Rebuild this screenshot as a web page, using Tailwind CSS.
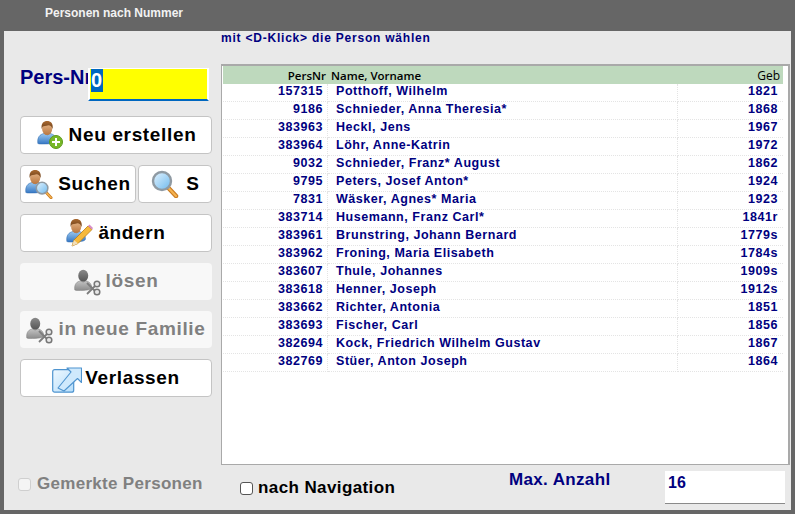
<!DOCTYPE html>
<html lang="de">
<head>
  <meta charset="UTF-8" />
  <title>Personen nach Nummer</title>
  <script src="https://cdn.jsdelivr.net/npm/@tailwindcss/browser@4"></script>
</head>
<body class="w-[795px] h-[514px] overflow-hidden bg-[#666666] font-['Liberation_Sans',Arial,sans-serif]">

  <!-- gemeinsame Icon-Teile -->
  <svg width="0" height="0" class="absolute">
    <defs>
      <linearGradient id="skin" x1="0" y1="0" x2="0" y2="1"><stop offset="0" stop-color="#e8b98c"/><stop offset="1" stop-color="#b9763f"/></linearGradient>
      <linearGradient id="hair" x1="0" y1="0" x2="0" y2="1"><stop offset="0" stop-color="#a8682f"/><stop offset="1" stop-color="#6b3f1a"/></linearGradient>
      <linearGradient id="shirt" x1="0" y1="0" x2="0" y2="1"><stop offset="0" stop-color="#9cc9f0"/><stop offset="1" stop-color="#3577c4"/></linearGradient>
      <linearGradient id="glass" x1="0" y1="0" x2="1" y2="1"><stop offset="0" stop-color="#e4f4ff"/><stop offset="1" stop-color="#6db9ee"/></linearGradient>
      <linearGradient id="greyhead" x1="0" y1="0" x2="0" y2="1"><stop offset="0" stop-color="#8a8a8a"/><stop offset="1" stop-color="#555555"/></linearGradient>
      <linearGradient id="greybody" x1="0" y1="0" x2="0" y2="1"><stop offset="0" stop-color="#c4c4c4"/><stop offset="1" stop-color="#8c8c8c"/></linearGradient>
      <linearGradient id="box" x1="0" y1="0" x2="1" y2="1"><stop offset="0" stop-color="#eef8ff"/><stop offset="1" stop-color="#b5ddfa"/></linearGradient>
      <symbol id="person" viewBox="0 0 26 28">
        <path d="M1 27c-1-7 2-11 8-12l3 2 3-2c5 1 8 4 8 9 0 2-3 3-11 3.500C7 27.500 3 28 1 27z" fill="url(#shirt)" stroke="#2f6bb0" stroke-width=".6"/>
        <ellipse cx="12" cy="9.500" rx="6" ry="7.500" fill="url(#skin)"/>
        <path d="M5.500 10C4.500 3 8 .5 12 .5s7.500 2.500 6.500 9.500c-1-3-2.500-4.500-5-4.500-3 1-6 1-6.500 1.500-.8.800-1.200 1.800-1.500 3z" fill="url(#hair)"/>
      </symbol>
      <symbol id="greyperson" viewBox="0 0 26 28">
        <path d="M1 27c-1-7 2-11 8-12l3 2 3-2c5 1 8 4 8 9 0 2-3 3-11 3.500C7 27.500 3 28 1 27z" fill="url(#greybody)" stroke="#777777" stroke-width=".6"/>
        <ellipse cx="12" cy="8.500" rx="6.500" ry="7.800" fill="url(#greyhead)"/>
      </symbol>
      <symbol id="lens" viewBox="0 0 28 28">
        <path d="M17.500 18l7.500 8" stroke="#c97a20" stroke-width="4.500" stroke-linecap="round"/>
        <path d="M17.500 18l7.500 8" stroke="#f5b350" stroke-width="2.200" stroke-linecap="round"/>
        <circle cx="11" cy="11" r="9" fill="url(#glass)" stroke="#8f9aa3" stroke-width="2.400"/>
      </symbol>
      <symbol id="scissors" viewBox="0 0 16 16">
        <path d="M2 14L13 3M2 3l11 11" stroke="#7d7d7d" stroke-width="1.800"/>
        <circle cx="12" cy="12" r="2.800" fill="#e8e8e8" stroke="#777777" stroke-width="1.500"/>
        <circle cx="12" cy="4" r="2.800" fill="#e8e8e8" stroke="#777777" stroke-width="1.500"/>
      </symbol>
    </defs>
  </svg>

  <!-- Titelleiste -->
  <div class="h-[31px] pl-[45px] pt-[6px] text-[12px] leading-[14px] font-bold text-[#f2f2f2]">Personen nach Nummer</div>

  <div class="h-[479px] mx-[4px] bg-[#e9e9e9] flex">

    <!-- linke Spalte -->
    <div class="w-[217px] shrink-0 pl-[16px] flex flex-col">
      <div class="flex mt-[37px] h-[33px]">
        <div class="w-[68px] overflow-hidden whitespace-nowrap text-[20px] leading-[19px] font-bold text-[#000080]">Pers-Nr</div>
        <div class="w-[121px] h-[33px] bg-[#ffff00] border-t border-x-2 border-t-white border-r-white border-l-white border-b-2 border-b-[#0067c0] pl-[1px] text-[20px] leading-[23px] font-bold">
          <span class="inline-block bg-[#0067c0] text-white tracking-[1px] h-[23px]">0</span>
        </div>
      </div>

      <div class="mt-[15px] w-[192px] flex flex-col gap-[11px]">
        <button class="h-[38px] bg-white border border-[#c4c4c4] rounded-[4px] flex items-center justify-center gap-[5px] text-[19px] font-bold tracking-[0.65px] text-black whitespace-nowrap">
          <svg width="28" height="30" viewBox="0 0 28 30">
            <use href="#person" x="1" y="0" width="22" height="25"/>
            <circle cx="20" cy="22" r="6.500" fill="#78b828" stroke="#5d9a1c"/>
            <path d="M20 18v8M16 22h8" stroke="#ffffff" stroke-width="2"/>
          </svg>
          Neu erstellen
        </button>
        <div class="flex gap-[2px]">
          <button class="w-[116px] h-[38px] bg-white border border-[#c4c4c4] rounded-[4px] flex items-center justify-center gap-[5px] text-[19px] font-bold tracking-[0.65px] text-black">
            <svg width="28" height="30" viewBox="0 0 28 30">
              <use href="#person" x="0" y="0" width="22" height="25"/>
              <use href="#lens" x="10" y="12" width="18" height="18"/>
            </svg>
            Suchen
          </button>
          <button class="w-[74px] h-[38px] bg-white border border-[#c4c4c4] rounded-[4px] flex items-center justify-center gap-[7px] text-[19px] font-bold text-black">
            <svg width="28" height="28" viewBox="0 0 28 28"><use href="#lens" width="28" height="28"/></svg>
            S
          </button>
        </div>
        <button class="h-[38px] bg-white border border-[#c4c4c4] rounded-[4px] flex items-center justify-center gap-[5px] text-[19px] font-bold tracking-[0.65px] text-black">
          <svg width="27" height="30" viewBox="0 0 27 30">
            <use href="#person" x="0" y="0" width="22" height="25"/>
            <path d="M6 28l2-6L22 8l4 3.500L12 25.500z" fill="#f6b93b" stroke="#b97c18" stroke-width=".8"/>
            <path d="M22 8l1.500-1.500 3.500 3.500-1 1.500z" fill="#d78cc8"/>
            <path d="M6 28l2-6 4 3.500z" fill="#f3dfb8"/>
          </svg>
          ändern
        </button>
        <button disabled class="h-[37px] bg-[#f8f8f8] rounded-[4px] flex items-center justify-center gap-[5px] text-[19px] font-bold tracking-[0.65px] text-[#808080]">
          <svg width="27" height="28" viewBox="0 0 27 28">
            <use href="#greyperson" x="0" y="0" width="20" height="24"/>
            <use href="#scissors" x="11" y="12" width="16" height="16"/>
          </svg>
          lösen
        </button>
        <button disabled class="h-[37px] bg-[#f8f8f8] rounded-[4px] flex items-center justify-center gap-[5px] text-[19px] font-bold tracking-[0.65px] text-[#808080] whitespace-nowrap">
          <svg width="27" height="28" viewBox="0 0 27 28">
            <use href="#greyperson" x="0" y="0" width="20" height="24"/>
            <use href="#scissors" x="11" y="12" width="16" height="16"/>
          </svg>
          in neue Familie
        </button>
        <button class="h-[38px] bg-white border border-[#c4c4c4] rounded-[4px] flex items-center justify-center gap-[3px] text-[19px] font-bold tracking-[0.65px] text-black">
          <svg width="30" height="30" viewBox="0 0 30 30">
            <rect x=".7" y="6.700" width="21" height="22.500" rx="2" fill="url(#box)" stroke="#4f94cf" stroke-width="1.200"/>
            <path d="M6 25L19 9l-4-4h14.500v14.500l-4-4L12 28z" fill="#cfe9fc" stroke="#4f94cf" stroke-width="1.100" stroke-linejoin="round"/>
          </svg>
          Verlassen
        </button>
      </div>

      <label class="mt-auto mb-[16px] -ml-[2px] flex items-center gap-[6px] text-[17px] leading-[20px] font-bold tracking-[0.3px] text-[#808080]">
        <input type="checkbox" disabled class="appearance-none shrink-0 w-[13px] h-[13px] bg-[#f4f4f4] border border-[#cfcfcf] rounded-[3px]" />
        Gemerkte Personen
      </label>
    </div>

    <!-- rechte Spalte -->
    <div class="flex-1 flex flex-col min-w-0 pr-[1px]">
      <div class="h-[33px] text-[12px] leading-[14px] font-bold tracking-[0.78px] text-[#000080]">mit &lt;D-Klick&gt; die Person wählen</div>

      <div class="h-[401px] bg-white border-2 border-[#a9a9a9] border-l border-b pl-[1px] pr-[5px]">
        <table class="w-full table-fixed border-separate border-spacing-0 text-[12.500px] leading-[14px] font-bold tracking-[0.55px] text-[#000080] [&_td]:pb-[3px] [&_td]:border-b [&_td]:border-dotted [&_td]:border-[#e4e4e4]">
          <thead>
            <tr class="h-[18px] bg-[#bed9bd] text-black font-['Open_Sans',sans-serif] text-[11.500px] tracking-normal">
              <th class="w-[105px] text-right pr-[2px] pt-[1px] font-semibold">PersNr</th>
              <th class="text-left pl-[3px] pt-[1px] font-semibold">Name, Vorname</th>
              <th class="w-[105px] text-right pr-[3px] pt-[1px] font-normal text-[12px]">Geb</th>
            </tr>
          </thead>
          <tbody>
            <tr class="h-[18px]"><td class="text-right pr-[4px] border-r">157315</td><td class="pl-[8px] border-r">Potthoff, Wilhelm</td><td class="text-right pr-[5px]">1821</td></tr>
            <tr class="h-[18px]"><td class="text-right pr-[4px] border-r">9186</td><td class="pl-[8px] border-r">Schnieder, Anna Theresia*</td><td class="text-right pr-[5px]">1868</td></tr>
            <tr class="h-[18px]"><td class="text-right pr-[4px] border-r">383963</td><td class="pl-[8px] border-r">Heckl, Jens</td><td class="text-right pr-[5px]">1967</td></tr>
            <tr class="h-[18px]"><td class="text-right pr-[4px] border-r">383964</td><td class="pl-[8px] border-r">Löhr, Anne-Katrin</td><td class="text-right pr-[5px]">1972</td></tr>
            <tr class="h-[18px]"><td class="text-right pr-[4px] border-r">9032</td><td class="pl-[8px] border-r">Schnieder, Franz* August</td><td class="text-right pr-[5px]">1862</td></tr>
            <tr class="h-[18px]"><td class="text-right pr-[4px] border-r">9795</td><td class="pl-[8px] border-r">Peters, Josef Anton*</td><td class="text-right pr-[5px]">1924</td></tr>
            <tr class="h-[18px]"><td class="text-right pr-[4px] border-r">7831</td><td class="pl-[8px] border-r">Wäsker, Agnes* Maria</td><td class="text-right pr-[5px]">1923</td></tr>
            <tr class="h-[18px]"><td class="text-right pr-[4px] border-r">383714</td><td class="pl-[8px] border-r">Husemann, Franz Carl*</td><td class="text-right pr-[5px]">1841r</td></tr>
            <tr class="h-[18px]"><td class="text-right pr-[4px] border-r">383961</td><td class="pl-[8px] border-r">Brunstring, Johann Bernard</td><td class="text-right pr-[5px]">1779s</td></tr>
            <tr class="h-[18px]"><td class="text-right pr-[4px] border-r">383962</td><td class="pl-[8px] border-r">Froning, Maria Elisabeth</td><td class="text-right pr-[5px]">1784s</td></tr>
            <tr class="h-[18px]"><td class="text-right pr-[4px] border-r">383607</td><td class="pl-[8px] border-r">Thule, Johannes</td><td class="text-right pr-[5px]">1909s</td></tr>
            <tr class="h-[18px]"><td class="text-right pr-[4px] border-r">383618</td><td class="pl-[8px] border-r">Henner, Joseph</td><td class="text-right pr-[5px]">1912s</td></tr>
            <tr class="h-[18px]"><td class="text-right pr-[4px] border-r">383662</td><td class="pl-[8px] border-r">Richter, Antonia</td><td class="text-right pr-[5px]">1851</td></tr>
            <tr class="h-[18px]"><td class="text-right pr-[4px] border-r">383693</td><td class="pl-[8px] border-r">Fischer, Carl</td><td class="text-right pr-[5px]">1856</td></tr>
            <tr class="h-[18px]"><td class="text-right pr-[4px] border-r">382694</td><td class="pl-[8px] border-r">Kock, Friedrich Wilhelm Gustav</td><td class="text-right pr-[5px]">1867</td></tr>
            <tr class="h-[18px]"><td class="text-right pr-[4px] border-r">382769</td><td class="pl-[8px] border-r">Stüer, Anton Joseph</td><td class="text-right pr-[5px]">1864</td></tr>
          </tbody>
        </table>
      </div>

      <div class="flex-1 flex">
        <label class="w-[160px] shrink-0 ml-[19px] mt-[13px] h-[20px] flex items-center gap-[5px] text-[17px] font-bold tracking-[0.4px] text-black whitespace-nowrap">
          <input type="checkbox" class="appearance-none shrink-0 w-[13px] h-[13px] bg-white border border-[#555555] rounded-[3px]" />
          nach Navigation
        </label>
        <div class="w-[102px] shrink-0 ml-[109px] mt-[5px] h-[20px] text-[17px] leading-[20px] font-bold tracking-[0.35px] text-[#000080] whitespace-nowrap">Max. Anzahl</div>
        <div class="ml-[54px] mt-[6px] w-[120px] shrink-0 h-[33px] bg-white border-b border-[#8a8a8a] pl-[3px] pt-[2px] text-[16px] leading-[20px] font-bold text-[#000080]">16</div>
      </div>
    </div>
  </div>
</body>
</html>
